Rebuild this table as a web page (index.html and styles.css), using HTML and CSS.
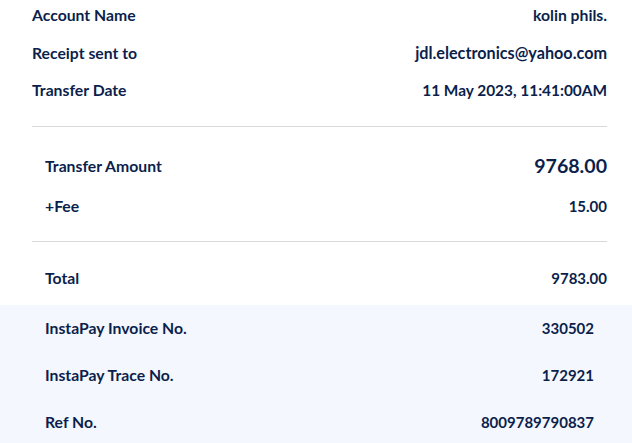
FILE: index.html
```html
<!DOCTYPE html>
<html>
<head>
<meta charset="utf-8">
<link rel="stylesheet" href="styles.css">
</head>
<body>
<div class="receipt">
  <section class="details">
    <div class="row"><span>Account Name</span><span>kolin phils.</span></div>
    <div class="row"><span>Receipt sent to</span><span class="email">jdl.electronics@yahoo.com</span></div>
    <div class="row"><span>Transfer Date</span><span class="date">11 May 2023, 11:41:00AM</span></div>
  </section>
  <hr class="divider">
  <section class="amounts">
    <div class="row amount"><span>Transfer Amount</span><span class="big">9768.00</span></div>
    <div class="row fee"><span>+Fee</span><span class="num">15.00</span></div>
  </section>
  <hr class="divider">
  <section class="amounts total-sec">
    <div class="row"><span>Total</span><span class="num">9783.00</span></div>
  </section>
  <section class="refs">
    <div class="row"><span>InstaPay Invoice No.</span><span class="num">330502</span></div>
    <div class="row"><span>InstaPay Trace No.</span><span class="num">172921</span></div>
    <div class="row"><span>Ref No.</span><span class="num">8009789790837</span></div>
  </section>
</div>
</body>
</html>
```

FILE: styles.css
```css
* { box-sizing: border-box; }
html, body { margin: 0; padding: 0; background: #ffffff; }
body {
  font-family: Lato, "Open Sans", sans-serif;
  font-weight: 700;
  font-size: 15.75px;
  color: #0c1f4c;
  width: 632px;
  height: 443px;
  overflow: hidden;
}
.row {
  display: flex;
  justify-content: space-between;
  align-items: center;
  height: 22px;
  line-height: 22px;
}
.num { font-size: 15px; }
.email { font-size: 16.2px; }
.date { font-size: 15.4px; }
.details {
  padding: 4px 25px 0 32px;
  display: flex;
  flex-direction: column;
  gap: 15.5px;
}
.divider {
  border: 0;
  height: 1px;
  background: #d9d9d9;
  margin: 25px 25px 0 32px;
}
.amounts {
  padding: 0 25px 0 45px;
}
.amount { height: 28px; margin-top: 24.7px; }
.big { font-size: 19.6px; }
.fee { margin-top: 15.3px; }
.amounts + .divider { margin-top: 24px; }
.total-sec { padding-top: 25px; padding-bottom: 16px; }
.refs {
  background: #f4f7fe;
  padding: 12px 38px 20px 45px;
  display: flex;
  flex-direction: column;
  gap: 25px;
}
```
